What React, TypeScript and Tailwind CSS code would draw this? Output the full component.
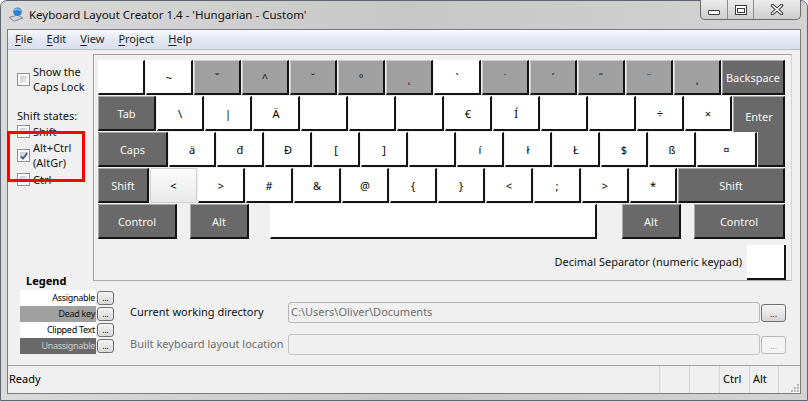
import React from "react";

type Tone = "w" | "g" | "d" | "h";
type KeyDef = { l?: string; t?: Tone; w?: string; c?: string };

const tones: Record<Tone, string> = {
  w: "bg-white border-t border-l border-t-white border-l-white border-r-2 border-b-2 border-r-[#141414] border-b-[#141414] text-black",
  g: "bg-[#a0a0a0] border-t border-l border-t-[#cdcdcd] border-l-[#cdcdcd] border-r-2 border-b-2 border-r-[#141414] border-b-[#141414] text-[#111]",
  d: "bg-[#696969] border-t border-l border-t-[#a8a8a8] border-l-[#a8a8a8] border-r-2 border-b-2 border-r-[#141414] border-b-[#141414] text-[#f6f6f6]",
  h: "bg-gradient-to-b from-[#fbfbfb] to-[#e9e9e9] border border-[#d0d0d0] rounded-[2px] text-black",
};

const row1: KeyDef[] = [
  {},
  { l: "~" },
  { l: "ˇ", t: "g" },
  { l: "^", t: "g" },
  { l: "˘", t: "g" },
  { l: "°", t: "g" },
  { l: "˛", t: "g" },
  { l: "`" },
  { l: "˙", t: "g" },
  { l: "´", t: "g" },
  { l: "˝", t: "g" },
  { l: "¨", t: "g" },
  { l: "¸", t: "g" },
  { l: "Backspace", t: "d", w: "w-[63px]" },
];

const row2: KeyDef[] = [
  { l: "Tab", t: "d", w: "w-[58px]" },
  { l: "\\" },
  { l: "|", c: "text-[#1b55b0]" },
  { l: "Ä" },
  {},
  {},
  {},
  { l: "€" },
  { l: "Í" },
  {},
  {},
  { l: "÷" },
  { l: "×", c: "text-[#1b55b0]" },
];

const row3: KeyDef[] = [
  { l: "Caps", t: "d", w: "w-[70px]" },
  { l: "ä" },
  { l: "đ" },
  { l: "Đ" },
  { l: "[" },
  { l: "]" },
  {},
  { l: "í" },
  { l: "ł" },
  { l: "Ł" },
  { l: "$" },
  { l: "ß" },
  { l: "¤", w: "w-[60px]" },
];

const row4: KeyDef[] = [
  { l: "Shift", t: "d", w: "w-[51px]" },
  { l: "<", t: "h" },
  { l: ">" },
  { l: "#" },
  { l: "&" },
  { l: "@" },
  { l: "{" },
  { l: "}" },
  { l: "<" },
  { l: ";" },
  { l: ">" },
  { l: "*" },
  { l: "Shift", t: "d", w: "w-[107px]" },
];

const Key = ({ k, extra }: { k: KeyDef; extra?: string }) => (
  <div
    className={`h-[35px] shrink-0 flex items-center justify-center text-[11px] leading-none ${
      k.w ?? "w-[47px]"
    } ${tones[k.t ?? "w"]} ${k.c ?? ""} ${extra ?? ""}`}
  >
    {k.l}
  </div>
);

const Check = ({ checked }: { checked?: boolean }) => (
  <span className="relative w-[13px] h-[13px] shrink-0 border border-[#8e8f8f] bg-white p-[2px] flex">
    <span className="flex-1 bg-gradient-to-br from-[#c6cad0] to-[#f3f3f3]" />
    {checked && (
      <svg className="absolute left-[1px] top-[1px]" width="10" height="10" viewBox="0 0 10 10">
        <path d="M1.8 5.2 L4 7.6 L8.4 1.8" fill="none" stroke="#41558a" strokeWidth="1.7" />
      </svg>
    )}
  </span>
);

const Dots = ({ off }: { off?: boolean }) => (
  <div
    className={`w-[25px] h-[18px] ml-px rounded-[3px] border flex items-end justify-center pb-[3px] text-[9px] leading-none ${
      off
        ? "border-[#b6b9bc] bg-[#f4f4f4] text-[#a8a8a8]"
        : "border-[#707070] bg-gradient-to-b from-[#f3f3f3] via-[#e8e8e8] to-[#d3d3d3] text-[#3a1010]"
    }`}
  >
    ...
  </div>
);

const legend = [
  { label: "Assignable", cls: "bg-white text-black" },
  { label: "Dead key", cls: "bg-[#a0a0a0] text-[#111]" },
  { label: "Clipped Text", cls: "bg-white text-black" },
  { label: "Unassignable", cls: "bg-[#696969] text-[#cfcfcf]" },
];

export default function App() {
  return (
    <div className="w-[808px] h-[401px] bg-white font-['Noto_Sans',sans-serif] text-[11px] text-black overflow-hidden">
      <div className="w-full h-full flex flex-col rounded-t-[7px] border border-[#5f6670] bg-gradient-to-r from-[#dadada] via-[#c7c7c7] to-[#d3d3d3] px-[6px] pb-[6px]">
        {/* title bar */}
        <div className="h-[28px] shrink-0 flex items-start">
          <svg className="ml-[1px] mt-[5px]" width="16" height="16" viewBox="0 0 16 16">
            <path d="M1 11.5 L9.5 9 L15 12 L6 15.2 Z" fill="#cfd4da" stroke="#6b7380" strokeWidth="0.8" />
            <circle cx="9.5" cy="5.8" r="4.3" fill="#2f7fd1" />
            <path d="M6.6 4.2 Q9.5 2 12.4 4.6" stroke="#a8d6ff" strokeWidth="1.1" fill="none" />
          </svg>
          <div className="ml-[5px] h-full flex items-center text-[11.5px] text-[#111]">
            Keyboard Layout Creator 1.4 - 'Hungarian - Custom'
          </div>
          <div className="ml-auto -mt-px flex h-[20px] rounded-b-[5px] border border-t-0 border-[#6b6b6b] overflow-hidden bg-gradient-to-b from-[#ececec] to-[#cdcdcd]">
            <div className="w-[27px] flex items-end justify-center pb-[4px] border-r border-[#8c8c8c]">
              <svg width="12" height="5" viewBox="0 0 12 5">
                <rect x="0.5" y="0.5" width="11" height="4" rx="0.5" fill="#fff" stroke="#3a3a3a" />
              </svg>
            </div>
            <div className="w-[26px] flex items-center justify-center border-r border-[#8c8c8c]">
              <svg width="12" height="10" viewBox="0 0 12 10">
                <rect x="0.5" y="0.5" width="11" height="9" fill="#fff" stroke="#3a3a3a" />
                <rect x="2.5" y="3.5" width="7" height="4" fill="#fff" stroke="#3a3a3a" />
              </svg>
            </div>
            <div className="w-[46px] flex items-center justify-center">
              <svg width="14" height="11" viewBox="0 0 14 11">
                <path d="M2.5 1.5 L11.5 9.5 M11.5 1.5 L2.5 9.5" stroke="#3a3a3a" strokeWidth="3.6" strokeLinecap="round" />
                <path d="M2.5 1.5 L11.5 9.5 M11.5 1.5 L2.5 9.5" stroke="#fff" strokeWidth="1.6" strokeLinecap="round" />
              </svg>
            </div>
          </div>
        </div>

        {/* client area */}
        <div className="flex-1 min-h-0 flex flex-col border border-[#7b7b7b] bg-[#f0f0f0]">
          {/* menu */}
          <div className="h-[20px] shrink-0 flex items-center bg-gradient-to-b from-[#f8f9fc] via-[#e4e8f2] to-[#dbe0ee] border-b border-[#b8bcc8] text-[#1e1e1e]">
            {["File", "Edit", "View", "Project", "Help"].map((m) => (
              <span key={m} className="px-[7px]">
                <span className="underline underline-offset-2">{m[0]}</span>
                {m.slice(1)}
              </span>
            ))}
          </div>

          {/* body */}
          <div className="h-[315px] shrink-0 flex flex-col">
            <div className="h-[231px] shrink-0 flex">
              {/* left options */}
              <div className="relative w-[85px] shrink-0 flex flex-col pl-[9px] text-[#111]">
                <div className="mt-[15px] flex items-center gap-[3px]">
                  <Check />
                  <span className="leading-[14.5px]">
                    Show the
                    <br />
                    Caps Lock
                  </span>
                </div>
                <div className="mt-[15px] leading-[13px]">Shift states:</div>
                <div className="mt-[3px] flex items-center gap-[3px]">
                  <Check />
                  <span className="leading-[13px]">Shift</span>
                </div>
                <div className="mt-[3px] flex items-center gap-[3px]">
                  <Check checked />
                  <span className="leading-[14.5px]">
                    Alt+Ctrl
                    <br />
                    (AltGr)
                  </span>
                </div>
                <div className="mt-[3px] flex items-center gap-[3px]">
                  <Check />
                  <span className="leading-[13px]">Ctrl</span>
                </div>
                <div className="absolute z-10 left-[-1px] top-[81px] w-[78px] h-[51px] border-[3px] border-[#ff0000]" />
              </div>

              {/* keyboard */}
              <div className="mt-[4px] w-[699px] h-[227px] shrink-0 flex flex-col border border-t-[#a0a0a0] border-l-[#a0a0a0] border-b-[#ababab] border-r-[#d4d4d4] pl-[4px] pr-[5px] pt-[5px]">
                <div className="h-[36px] flex gap-px items-start">
                  {row1.map((k, i) => (
                    <Key key={i} k={k} />
                  ))}
                </div>
                <div className="h-[36px] flex gap-px items-start">
                  {row2.map((k, i) => (
                    <Key key={i} k={k} />
                  ))}
                  <div className="h-[36px] w-[52px] shrink-0 bg-[#696969] border-t border-l border-r-2 border-t-[#a8a8a8] border-l-[#a8a8a8] border-r-[#141414] text-[#f6f6f6] flex justify-center pt-[14px] pl-[1px] leading-none">
                    Enter
                  </div>
                </div>
                <div className="h-[36px] flex gap-px items-start">
                  {row3.map((k, i) => (
                    <Key key={i} k={k} />
                  ))}
                  <div className="h-[35px] w-[27px] shrink-0 bg-[#696969] border-r-2 border-b-2 border-r-[#141414] border-b-[#141414]" />
                </div>
                <div className="h-[36px] flex gap-px items-start">
                  {row4.map((k, i) => (
                    <Key key={i} k={k} />
                  ))}
                </div>
                <div className="h-[36px] flex items-start">
                  <Key k={{ l: "Control", t: "d", w: "w-[79px]" }} />
                  <Key k={{ l: "Alt", t: "d", w: "w-[59px]" }} extra="ml-[13px]" />
                  <Key k={{ w: "w-[327px]" }} extra="ml-[21px]" />
                  <Key k={{ l: "Alt", t: "d", w: "w-[59px]" }} extra="ml-[25px]" />
                  <Key k={{ l: "Control", t: "d", w: "w-[91px]" }} extra="ml-[13px]" />
                </div>
                <div className="mt-[5px] flex items-center justify-end">
                  <span className="mr-[5px] text-[#111]">Decimal Separator (numeric keypad)</span>
                  <div className="w-[39px] h-[35px] bg-white border-r-2 border-b-2 border-[#141414]" />
                </div>
              </div>
            </div>

            {/* legend + paths */}
            <div className="flex-1 flex items-start pl-[12px]">
              <div className="w-[94px] shrink-0 flex flex-col">
                <div className="-mt-[7px] pl-[6px] font-bold leading-[14px]">Legend</div>
                <div className="mt-[2px] flex flex-col">
                  {legend.map((r) => (
                    <div key={r.label} className="h-[16px] flex items-center">
                      <div className={`w-[76px] h-full flex items-center justify-end pr-[1px] text-[9px] tracking-[-0.3px] ${r.cls}`}>
                        {r.label}
                      </div>
                      <div className="ml-px w-[17px] h-[14px] rounded-[3px] border border-[#707070] bg-gradient-to-b from-[#f3f3f3] to-[#d8d8d8] flex items-end justify-center pb-[2px] text-[8px] leading-none">
                        ...
                      </div>
                    </div>
                  ))}
                </div>
              </div>
              <div className="ml-[16px] mt-[21px] flex flex-col gap-[11px]">
                <div className="h-[21px] flex items-center">
                  <div className="w-[158px] text-[#111]">Current working directory</div>
                  <div className="w-[472px] h-[21px] rounded-[3px] border border-[#b5b5b5] bg-[#f0f0f0] flex items-center pl-[2px] text-[#6d6d6d]">
                    {"C:\\Users\\Oliver\\Documents"}
                  </div>
                  <Dots />
                </div>
                <div className="h-[21px] flex items-center">
                  <div className="w-[158px] text-[#6d6d6d]">Built keyboard layout location</div>
                  <div className="w-[472px] h-[21px] rounded-[3px] border border-[#c3c3c3] bg-[#f0f0f0]" />
                  <Dots off />
                </div>
              </div>
            </div>
          </div>

          {/* status bar */}
          <div className="flex-1 flex border-t border-[#a0a0a0] bg-[#f0efef]">
            <div className="flex-1 flex items-center pl-[1px]">Ready</div>
            <div className="w-[30px] border-l border-[#d2d2d2]" />
            <div className="w-[30px] border-l border-[#d2d2d2]" />
            <div className="w-[30px] border-l border-[#d2d2d2] flex items-center pl-[3px]">Ctrl</div>
            <div className="w-[29px] border-l border-[#d2d2d2] flex items-center pl-[3px]">Alt</div>
            <div className="w-[22px] border-l border-[#d2d2d2] flex items-end justify-end">
              <svg width="11" height="11" viewBox="0 0 11 11">
                {[
                  [8, 8],
                  [8, 5],
                  [5, 8],
                  [8, 2],
                  [5, 5],
                  [2, 8],
                ].map(([x, y], i) => (
                  <g key={i}>
                    <rect x={x + 1} y={y + 1} width="2" height="2" fill="#fff" />
                    <rect x={x} y={y} width="2" height="2" fill="#b5b5b5" />
                  </g>
                ))}
              </svg>
            </div>
          </div>
        </div>
      </div>
    </div>
  );
}
